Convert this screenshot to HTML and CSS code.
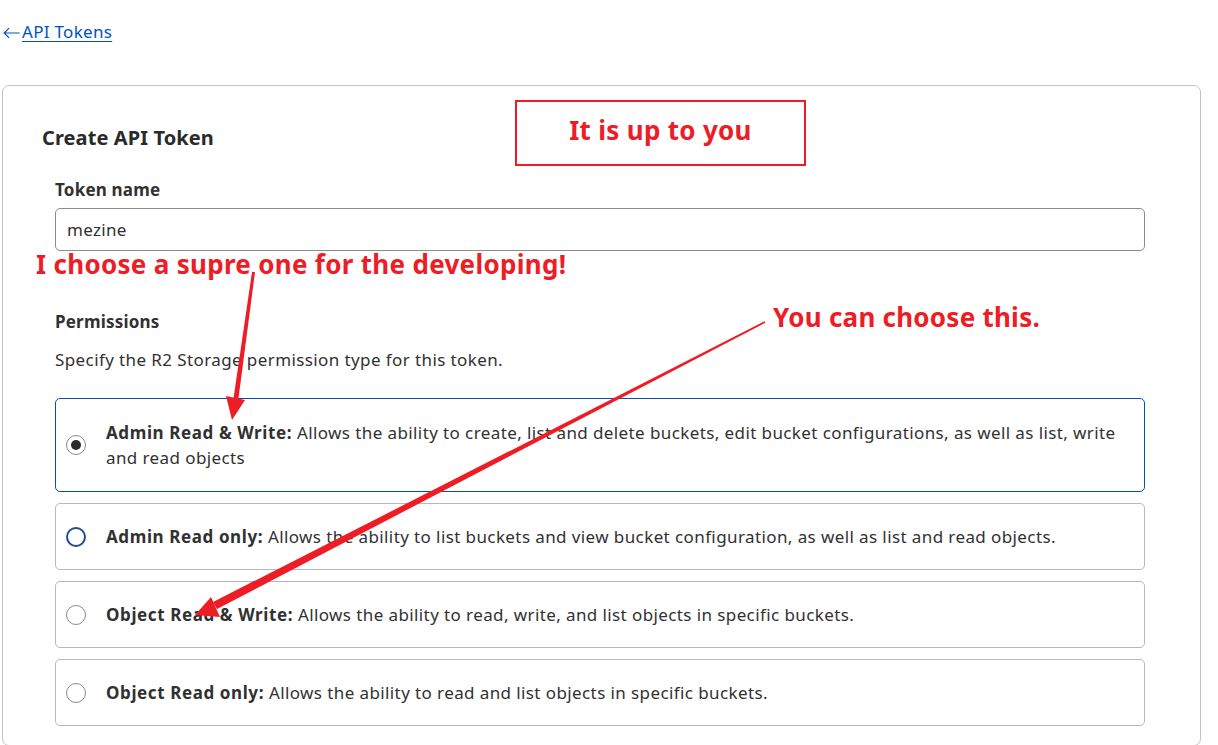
FILE: index.html
```html
<!DOCTYPE html>
<html>
<head>
<meta charset="utf-8">
<link rel="stylesheet" href="styles.css">
</head>
<body>
<div class="page">
  <div class="back"><svg class="back-arrow" width="17" height="12" viewBox="0 0 17 12"><path d="M16.5 6H1.2M6 1.2L1.2 6L6 10.8" fill="none" stroke="#0051c3" stroke-width="1.2"/></svg><a class="back-link" href="#">API Tokens</a></div>
  <div class="card">
    <h2 class="title">Create API Token</h2>
    <div class="form">
      <div class="label">Token name</div>
      <div class="input">mezine</div>
      <div class="label perm-label">Permissions</div>
      <div class="help">Specify the R2 Storage permission type for this token.</div>
      <div class="options">
        <div class="option selected">
          <span class="radio checked"></span>
          <div class="opt-text"><b>Admin Read &amp; Write:</b> Allows the ability to create, list and delete buckets, edit bucket configurations, as well as list, write and read objects</div>
        </div>
        <div class="option">
          <span class="radio focus"></span>
          <div class="opt-text"><b>Admin Read only:</b> Allows the ability to list buckets and view bucket configuration, as well as list and read objects.</div>
        </div>
        <div class="option">
          <span class="radio"></span>
          <div class="opt-text"><b>Object Read &amp; Write:</b> Allows the ability to read, write, and list objects in specific buckets.</div>
        </div>
        <div class="option">
          <span class="radio"></span>
          <div class="opt-text"><b>Object Read only:</b> Allows the ability to read and list objects in specific buckets.</div>
        </div>
      </div>
    </div>
  </div>

  <div class="note note-box">It is up to you</div>
  <div class="note note-choose">I choose a supre one for the developing!</div>
  <div class="note note-you">You can choose this.</div>
  <svg class="arrows" width="1218" height="745" viewBox="0 0 1218 745">
    <polygon points="252,272 255,272 238,402 233,402" fill="#ee1c25"/>
    <polygon points="226,396 245,400 232,420" fill="#ee1c25"/>
    <polygon points="764.6,321.3 765.4,322.7 217,609 213,602" fill="#ee1c25"/>
    <polygon points="211,597 220,617 195,615" fill="#ee1c25"/>
  </svg>
</div>
</body>
</html>
```
FILE: styles.css
```css
* { box-sizing: border-box; }
html, body { margin: 0; padding: 0; background: #fff; }
body {
  font-family: "Noto Sans", "Open Sans", sans-serif;
  color: #313131;
  width: 1218px;
  height: 745px;
  overflow: hidden;
}
.page { position: relative; padding: 20px 0 0 2px; height: 745px; }
.back { font-size: 17px; line-height: 24px; height: 24px; display: flex; align-items: center; letter-spacing: 0.3px; }
.back-arrow { display: block; margin: 1px 2px 0 1px; }
.back-link { color: #0051c3; text-decoration: underline; text-underline-offset: 3px; }
.card {
  margin-top: 41px;
  width: 1199px;
  height: 661px;
  border: 1px solid #c3c3c3;
  border-radius: 7px;
  padding: 38px 55px 0 39px;
}
.title { margin: 0; font-size: 20px; font-weight: 700; line-height: 28px; color: #2a2a2a; letter-spacing: 0.1px; }
.form { padding-left: 13px; }
.label { font-size: 17px; font-weight: 700; line-height: 24px; margin-top: 26px; letter-spacing: 0.2px; }
.input {
  margin-top: 6px;
  height: 43px;
  border: 1px solid #8c8c8c;
  border-radius: 5px;
  padding: 0 11px;
  font-size: 17px;
  line-height: 41px;
  letter-spacing: 0.3px;
}
.perm-label { margin-top: 59px; }
.help { font-size: 17px; line-height: 24px; margin-top: 14px; letter-spacing: 0.4px; }
.options { margin-top: 26px; display: flex; flex-direction: column; gap: 11px; }
.option {
  display: flex;
  align-items: center;
  border: 1px solid #b8b8b8;
  border-radius: 5px;
  min-height: 67px;
  padding: 8px 20px 8px 0;
}
.option.selected { border-color: #0a4db0; min-height: 94px; }
.radio {
  flex: none;
  width: 20px; height: 20px;
  border: 1px solid #8a8a8a;
  border-radius: 50%;
  margin: 0 20px 0 10px;
  display: flex; align-items: center; justify-content: center;
}
.radio.checked::after { content: ""; width: 10px; height: 10px; border-radius: 50%; background: #2b2b2b; }
.radio.focus { border: 2px solid #1f4b8f; }
.opt-text { font-size: 17px; line-height: 25px; letter-spacing: 0.4px; }
.opt-text b { font-weight: 700; letter-spacing: 0.6px; }

.note {
  position: absolute;
  color: #ee1c25;
  font-weight: 700;
  font-size: 26px;
  line-height: 34px;
  white-space: nowrap;
}
.note-box {
  left: 515px; top: 100px; width: 291px; height: 66px;
  border: 2px solid #ee1c25;
  display: flex; align-items: center; justify-content: center;
  padding-bottom: 6px;
  letter-spacing: 0.3px;
}
.note-choose { left: 36px; top: 247px; letter-spacing: 0.3px; }
.note-you { left: 773px; top: 300px; letter-spacing: 0.25px; }
.arrows { position: absolute; left: 0; top: 0; pointer-events: none; }
```
